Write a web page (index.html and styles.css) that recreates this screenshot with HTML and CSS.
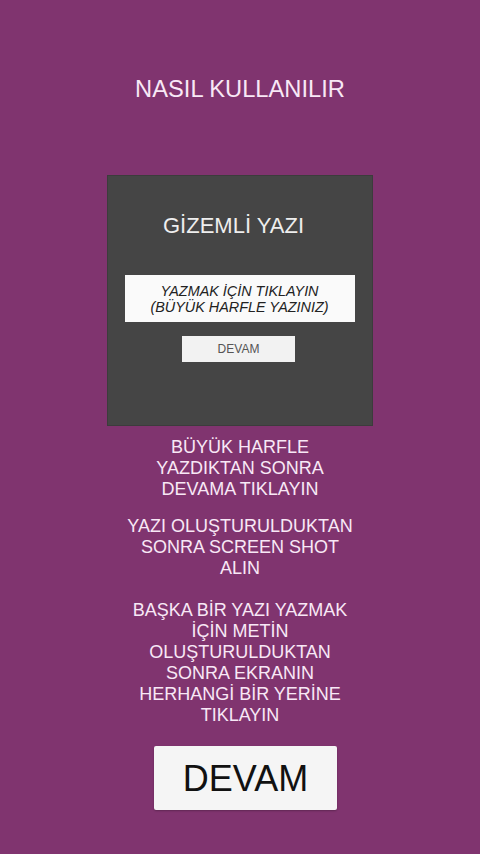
FILE: index.html
```html
<!DOCTYPE html>
<html lang="tr">
<head>
<meta charset="utf-8">
<link rel="stylesheet" href="styles.css">
</head>
<body>
<div class="screen">
  <h1 class="title">NASIL KULLANILIR</h1>
  <div class="preview">
    <div class="preview-title">GİZEMLİ YAZI</div>
    <div class="preview-input">YAZMAK İÇİN TIKLAYIN<br>(BÜYÜK HARFLE YAZINIZ)</div>
    <div class="preview-btn">DEVAM</div>
  </div>
  <p class="note n1">BÜYÜK HARFLE<br>YAZDIKTAN SONRA<br>DEVAMA TIKLAYIN</p>
  <p class="note n2">YAZI OLUŞTURULDUKTAN<br>SONRA SCREEN SHOT<br>ALIN</p>
  <p class="note n3">BAŞKA BİR YAZI YAZMAK<br>İÇİN METİN<br>OLUŞTURULDUKTAN<br>SONRA EKRANIN<br>HERHANGİ BİR YERİNE<br>TIKLAYIN</p>
  <button class="devam">DEVAM</button>
</div>
</body>
</html>
```

FILE: styles.css
```css
html, body {
  margin: 0;
  padding: 0;
}
body {
  background: #80346f;
  font-family: "Liberation Sans", Arial, sans-serif;
  width: 480px;
  height: 854px;
  overflow: hidden;
}
.screen {
  display: flex;
  flex-direction: column;
  align-items: center;
}
.title {
  margin: 77px 0 0;
  font-size: 23.7px;
  line-height: 24px;
  font-weight: normal;
  color: #f8e8f6;
}
.preview {
  margin-top: 74px;
  width: 266px;
  height: 251px;
  box-sizing: border-box;
  background: #454545;
  border: 1px solid #3c3c3c;
  display: flex;
  flex-direction: column;
  align-items: center;
  margin-left: -1px;
}
.preview-title {
  margin-top: 38px;
  margin-left: -12px;
  font-size: 22px;
  line-height: 24px;
  color: #eeeeee;
}
.preview-input {
  margin-top: 37px;
  width: 230px;
  height: 47px;
  box-sizing: border-box;
  background: #fafafa;
  color: #222;
  font-style: italic;
  font-size: 14.4px;
  line-height: 16px;
  text-align: center;
  padding-top: 8px;
}
.preview-btn {
  margin-top: 14px;
  width: 113px;
  height: 26px;
  box-sizing: border-box;
  background: #f2f2f2;
  color: #555;
  font-size: 12px;
  line-height: 26px;
  text-align: center;
  margin-left: -2px;
}
.note {
  margin: 0;
  color: #f8e8f6;
  font-size: 18px;
  line-height: 21px;
  text-align: center;
}
.n1 { margin-top: 11px; }
.n2 { margin-top: 16px; }
.n3 { margin-top: 21px; }
.devam {
  margin-top: 20px;
  margin-left: 11px;
  width: 183px;
  height: 64px;
  background: #f5f5f5;
  border: none;
  border-radius: 2px;
  box-shadow: 0 1px 2px rgba(0,0,0,0.25);
  font-family: "Liberation Sans", Arial, sans-serif;
  font-size: 36px;
  line-height: 66px;
  color: #111;
  padding: 0;
}
```
